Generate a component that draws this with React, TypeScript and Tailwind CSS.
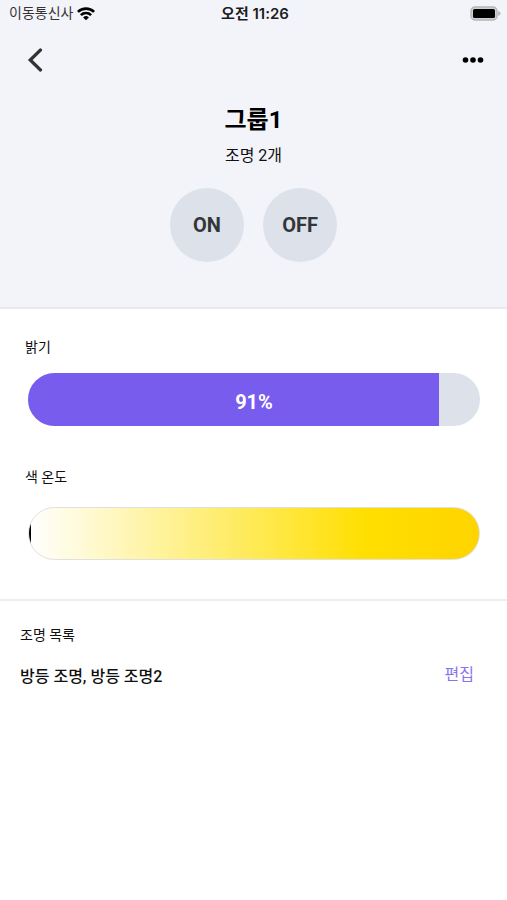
import { useState } from "react";

const lights = ["방등 조명", "방등 조명2"];

function WifiIcon() {
  return (
    <svg viewBox="0 0 18 14" className="h-[14px] w-[18px]" aria-hidden="true">
      <g fill="none" stroke="#000" strokeWidth="2.7">
        <path d="M0.9 4.9a11.6 11.6 0 0 1 16.2 0" />
        <path d="M3.9 8.1a7.3 7.3 0 0 1 10.2 0" />
      </g>
      <path d="M9 13.3 6.1 10.4a4.2 4.2 0 0 1 5.8 0z" fill="#000" />
    </svg>
  );
}

function BatteryIcon() {
  return (
    <svg viewBox="0 0 31 15" className="h-[15px] w-[31px]" aria-hidden="true">
      <rect x="1" y="1" width="26" height="13" rx="4" fill="#d0d1d3" stroke="#b4b5b8" strokeWidth="1.4" />
      <rect x="3" y="3" width="22" height="9" rx="1.5" fill="#000" />
      <path d="M28.2 5v5c1.4-.5 2.3-1.4 2.3-2.5S29.6 5.5 28.2 5z" fill="#b4b5b8" />
    </svg>
  );
}

function StatusBar() {
  return (
    <div className="grid h-[27px] grid-cols-3 items-center pr-1.5 pl-[9px]">
      <div className="flex items-center gap-1 text-[14px] text-[#333]">
        이동통신사
        <WifiIcon />
      </div>
      <div className="text-center font-[Inter,'Noto_Sans_CJK_KR',sans-serif] text-[15px] leading-5 font-semibold text-[#1c1c1e]">
        오전 11:26
      </div>
      <div className="flex justify-end">
        <BatteryIcon />
      </div>
    </div>
  );
}

function PowerButton({ label }: { label: string }) {
  return (
    <button
      type="button"
      className="size-[74px] rounded-full bg-[#dce1ea] text-[20px] font-bold text-[#333639]"
    >
      {label}
    </button>
  );
}

export default function App() {
  const [brightness, setBrightness] = useState(91);
  const [temperature, setTemperature] = useState(0);

  return (
    <div className="min-h-screen bg-white font-[Roboto,'Noto_Sans_CJK_KR',sans-serif] text-[#111]">
      <header className="border-b-2 border-[#e8eaef] bg-[#f3f4f9] pb-[45px]">
        <StatusBar />
        <nav className="flex h-[65px] items-center justify-between pr-[23px] pl-[27px]">
          <button type="button" aria-label="뒤로">
            <svg viewBox="0 0 16 24" className="h-6 w-4" fill="none" aria-hidden="true">
              <path d="M13.5 2 3.2 12l10.3 10" stroke="#333" strokeWidth="3.2" strokeLinecap="round" />
            </svg>
          </button>
          <button type="button" aria-label="더보기">
            <svg viewBox="0 0 22 6" className="h-1.5 w-[22px]" aria-hidden="true">
              <circle cx="3.5" cy="3" r="2.8" />
              <circle cx="11" cy="3" r="2.8" />
              <circle cx="18.5" cy="3" r="2.8" />
            </svg>
          </button>
        </nav>
        <div className="flex flex-col items-center pt-3">
          <h1 className="text-[24px] leading-8 font-bold text-black">그룹1</h1>
          <p className="mt-2 text-[16px] leading-6">조명 2개</p>
          <div className="mt-5 flex gap-[19px]">
            <PowerButton label="ON" />
            <PowerButton label="OFF" />
          </div>
        </div>
      </header>

      <main>
        <section className="border-b-2 border-[#eeeef0] px-[27px] pt-7 pb-[39px]">
          <label htmlFor="brightness" className="-ml-0.5 block text-[14px] leading-5">
            밝기
          </label>
          <div className="relative mt-4 ml-px h-[53px] overflow-hidden rounded-full bg-[#dce1ea]">
            <div className="h-full bg-[#785cee]" style={{ width: `${brightness}%` }} />
            <input
              id="brightness"
              type="range"
              value={brightness}
              onChange={(e) => setBrightness(Number(e.target.value))}
              className="absolute inset-0 size-full appearance-none bg-transparent [&::-webkit-slider-thumb]:h-[53px] [&::-webkit-slider-thumb]:w-6 [&::-webkit-slider-thumb]:appearance-none [&::-webkit-slider-thumb]:bg-transparent"
            />
            <span className="pointer-events-none absolute inset-0 flex items-center justify-center pt-1 text-[20px] font-bold text-white">
              {brightness}%
            </span>
          </div>

          <label htmlFor="temperature" className="-ml-0.5 mt-[41px] block text-[14px] leading-5">
            색 온도
          </label>
          <div className="mt-5 ml-px h-[53px] overflow-hidden rounded-full border border-[#dfe1e0] bg-linear-to-r/srgb from-white via-[#ffdf00] via-75% to-[#ffd400]">
            <input
              id="temperature"
              type="range"
              value={temperature}
              onChange={(e) => setTemperature(Number(e.target.value))}
              className="block size-full appearance-none bg-transparent [&::-webkit-slider-thumb]:h-[51px] [&::-webkit-slider-thumb]:w-0.5 [&::-webkit-slider-thumb]:appearance-none [&::-webkit-slider-thumb]:bg-black"
            />
          </div>
        </section>

        <section className="px-5 pt-6">
          <h2 className="text-[14px] leading-5">조명 목록</h2>
          <div className="mt-4 flex items-center justify-between pr-[13px]">
            <p className="pt-1 text-[16px] leading-6 font-medium">{lights.join(", ")}</p>
            <button type="button" className="text-[16px] leading-6 text-[#8a73ee]">
              편집
            </button>
          </div>
        </section>
      </main>
    </div>
  );
}
